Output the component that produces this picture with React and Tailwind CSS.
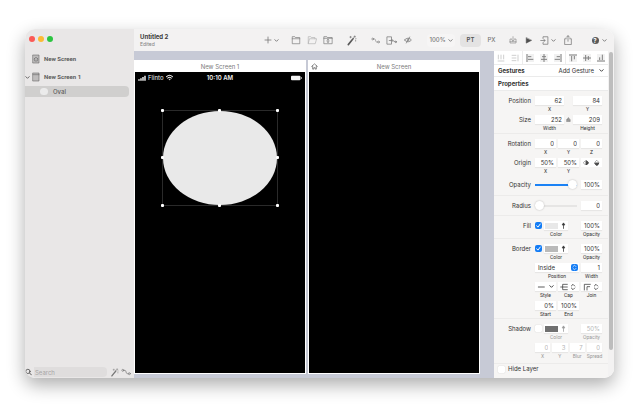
import { useState } from "react";

const sans = "font-['Inter','Liberation_Sans',sans-serif]";

function Icon({ children, className = "w-3 h-3" }) {
    return (
        <svg viewBox="0 0 12 12" className={`block shrink-0 ${className}`} fill="none" stroke="currentColor" strokeWidth="0.8" strokeLinecap="round" strokeLinejoin="round" aria-hidden="true">
            {children}
        </svg>
    );
}

const Chevron = () => (
    <Icon className="w-[5px] h-[5px]"><path d="M2 4l4 4 4-4" strokeWidth="2.200" /></Icon>
);

const UpDown = ({ className = "w-2 h-2" }) => (
    <Icon className={className}><path d="M3.500 4.500L6 2l2.500 2.500M3.500 7.500L6 10l2.500-2.500" strokeWidth="1.200" /></Icon>
);

const Wand = ({ className }) => (
    <Icon className={className}>
        <path d="M2.500 10.500L6.800 5.200" strokeWidth="1.800" />
        <path d="M7.200 4.700l.6-.7" strokeWidth="1.600" />
        <path d="M5 1.500v1.600M4.200 2.300h1.600M9.500 1v1.600M8.700 1.800h1.600M10.500 5.500v1.200M8 2.900v.2M10.800 3.800v.2" strokeWidth="0.600" />
    </Icon>
);

const LinkIcon = ({ className }) => (
    <Icon className={className}>
        <circle cx="2.200" cy="4" r="1.200" />
        <circle cx="10" cy="8" r="1.200" />
        <path d="M3.400 4h1.400c1.800 0 .8 4 2.600 4h1.400" />
    </Icon>
);

function ToolButton({ label, children, className = "w-4" }) {
    return (
        <button type="button" aria-label={label} className={`flex h-4 shrink-0 items-center justify-center gap-[2px] ${className}`}>
            {children}
        </button>
    );
}

function Toolbar() {
    return (
        <header className="flex h-[22px] items-center bg-[#f3f2f2] pl-[6px] pr-[5px] text-[#777]">
            <div className="w-[110px] min-w-0 text-[#3c3c3c]">
                <h1 className="text-[6px] leading-[8px] font-bold">Untitled 2</h1>
                <p className="text-[5px] leading-[6px] text-[#808080]">Edited</p>
            </div>
            <div className="ml-auto flex items-center">
                <ToolButton label="Add" className="w-[18px]">
                    <Icon className="w-2 h-2"><path d="M6 1.500v9M1.500 6h9" strokeWidth="1.200" /></Icon>
                    <Chevron />
                </ToolButton>
                <div className="ml-2 flex">
                    <ToolButton label="New group">
                        <Icon className="w-2.5 h-2.5"><path d="M1.500 10V2h3l.8 1h5.200v7zM1.500 4.500h9" /></Icon>
                    </ToolButton>
                    <ToolButton label="Open group">
                        <span className="text-[#b0b0b0]">
                            <Icon className="w-2.5 h-2.5"><path d="M1.500 10V2h3l.8 1h4.200v1.500M1.500 10l1.500-5.500h8.500L10 10z" /></Icon>
                        </span>
                    </ToolButton>
                    <ToolButton label="Scroll group">
                        <Icon className="w-2.5 h-2.5"><path d="M1 10V2h3.500l.8 1H11v7zM1 4h10M6 5.300v3.400M4.800 6.300L6 5.200l1.200 1.100M4.800 7.900L6 9l1.200-1.100" /></Icon>
                    </ToolButton>
                </div>
                <div className="ml-[7px] flex text-[#5a5a5a]">
                    <ToolButton label="Behavior designer"><Wand className="w-[11px] h-[11px]" /></ToolButton>
                </div>
                <div className="ml-2 flex">
                    <ToolButton label="Link"><LinkIcon className="w-[9px] h-[9px]" /></ToolButton>
                    <ToolButton label="Link out" className="w-[17px]">
                        <Icon className="w-[11px] h-[11px]"><path d="M6 4.500V2H1v8h5V8M3.500 6h3" /><path d="M6.200 4.700L7.800 6 6.200 7.300zM7.800 6c1 0 1 1.500 2 1.500" /><circle cx="10.600" cy="7.500" r="0.800" /></Icon>
                    </ToolButton>
                    <ToolButton label="Toggle links">
                        <Icon className="w-2 h-2"><path d="M1 6c2-3.600 8-3.600 10 0-2 3.600-8 3.600-10 0zM3.500 10.500l5-9" strokeWidth="1.100" /><circle cx="6" cy="6" r="1.300" /></Icon>
                    </ToolButton>
                </div>
                <button type="button" className="ml-[11px] flex h-[13px] w-7 items-center justify-center gap-[2px] rounded-sm bg-[#f6f5f5] text-[6px] leading-[8px] font-medium">
                    100% <Chevron />
                </button>
                <button type="button" className="ml-[5px] h-[13px] w-[21px] rounded-sm bg-[#e4e3e3] text-[6px] leading-[8px] font-semibold text-[#555]">PT</button>
                <button type="button" className="h-[13px] w-[21px] text-[6px] leading-[8px] font-medium">PX</button>
                <ToolButton label="Import from Sketch" className="ml-[3px] w-4">
                    <Icon className="w-2 h-2"><path d="M4 4.500H1.500v6h9v-6H8M6 1v6.500M4 5.800l2 2 2-2M1.500 8.500h9" /></Icon>
                </ToolButton>
                <ToolButton label="Preview" className="w-[14px] text-[#4f4f4f]">
                    <Icon className="w-[7px] h-[7px]"><path d="M2 1.500v9L11 6z" fill="currentColor" /></Icon>
                </ToolButton>
                <ToolButton label="Export" className="ml-[3px] w-5">
                    <Icon className="w-[9px] h-[9px]"><path d="M4 3V1h6.500v10H4V9M1 6h5.500M4.800 4L6.800 6l-2 2" strokeWidth="1" /></Icon>
                    <Chevron />
                </ToolButton>
                <ToolButton label="Share" className="ml-[2px] w-4">
                    <Icon className="w-2.5 h-2.5"><path d="M4 4.500H2v7h8v-7H8M6 7.500V1M4 2.800L6 .8l2 2" strokeWidth="0.900" /></Icon>
                </ToolButton>
                <button type="button" aria-label="Help" className="ml-[13px] flex h-4 w-5 items-center justify-center gap-[3px]">
                    <span className="flex h-[7px] w-[7px] items-center justify-center rounded-full bg-[#5a5a5a] text-[6px] leading-[7px] font-bold text-white">?</span>
                    <Chevron />
                </button>
            </div>
        </header>
    );
}

function Sidebar() {
    return (
        <aside className="flex w-[109px] shrink-0 flex-col bg-[#e9e7e7] text-[6px] leading-[8px] text-[#5c5c5c]">
            <div className="flex gap-[3px] px-1 pt-[7px]">
                <button type="button" aria-label="Close" className="h-1.5 w-1.5 rounded-full bg-[#fb5a56]" />
                <button type="button" aria-label="Minimize" className="h-1.5 w-1.5 rounded-full bg-[#fcbb35]" />
                <button type="button" aria-label="Zoom" className="h-1.5 w-1.5 rounded-full bg-[#2cc541]" />
            </div>
            <ul className="mt-[8px] font-['Roboto','Liberation_Sans',sans-serif] font-bold">
                <li className="flex h-[18px] items-center gap-1 pl-[7px]">
                    <Icon className="w-2 h-2.5"><path d="M1.500 0h9v12h-9z" fill="#bebcbc" /><path d="M3 6l3-2.700L9 6M4 5.500V9h4V5.500" /></Icon>
                    New Screen
                </li>
                <li className="flex h-[18px] items-center gap-1">
                    <span className="-mr-[2px]"><Chevron /></span>
                    <Icon className="w-2 h-2.5"><path d="M1.500 0h9v12h-9z" fill="#bebcbc" /><path d="M1.500 2.500h9" /></Icon>
                    New Screen 1
                </li>
                <li className="mr-[5px] flex h-[11px] items-center gap-[5px] rounded-r-sm bg-[#d0cfce] pl-[15px] font-['Inter','Liberation_Sans',sans-serif] font-medium">
                    <span className="h-[7px] w-2 rounded-full bg-[#ebebeb]" />
                    Oval
                </li>
            </ul>
            <div className="mt-auto flex items-center gap-[3px] pr-[3px] pb-px text-[#777]">
                <label className="flex h-[10px] flex-1 items-center rounded-sm bg-[#dfdddd]">
                    <span className="bg-[#e9e7e7] pr-[2px] text-[#444]">
                        <Icon className="w-[7px] h-[10px]"><circle cx="5" cy="5" r="3.700" strokeWidth="1.300" /><path d="M8 8l3 3" strokeWidth="1.500" /></Icon>
                    </span>
                    <input type="text" aria-label="Search" placeholder="Search" className="h-[10px] w-full min-w-0 bg-transparent pl-px text-[6px] leading-[8px] outline-none placeholder:text-[#a8a6a6]" />
                </label>
                <div className="flex shrink-0 gap-[2px]">
                    <button type="button" aria-label="Filter behaviors"><Wand className="w-[9px] h-[9px]" /></button>
                    <button type="button" aria-label="Filter links"><LinkIcon className="w-2.5 h-2.5" /></button>
                </div>
            </div>
        </aside>
    );
}

function Handle({ className }) {
    return <span className={`absolute h-[3px] w-[3px] rounded-[1px] bg-white ${className}`} />;
}

function Frame({ title, home, children }) {
    return (
        <section className="flex flex-1 flex-col bg-white">
            <div className="relative h-3 text-center text-[6px] leading-[13px] text-[#7c7c7c]">
                {home && (
                    <span className="absolute top-[3px] left-[3px] text-[#555]">
                        <Icon className="w-[7px] h-[7px]"><path d="M1 6l5-4.500L11 6M2.800 5v5.500h2V8h2.400v2.500h2V5" strokeWidth="1.100" /></Icon>
                    </span>
                )}
                {title}
            </div>
            <div className="relative mx-px mb-px flex-1 bg-black">{children}</div>
        </section>
    );
}

function Canvas() {
    return (
        <main className="flex flex-1 gap-[2px] bg-[#c7cad6] pt-[9px] pr-[14px] pb-1">
            <Frame title="New Screen 1">
                <div className="grid grid-cols-3 items-center px-[3px] pt-px text-[6px] leading-[9px] font-semibold text-[#f2f2f2]">
                    <span className="flex items-center gap-[2px] font-normal">
                        <Icon className="w-2 h-2"><path d="M1.500 8v2M4.500 6.500v3.500M7.500 4.500v5.500M10.500 2.500v7.500" strokeWidth="2.200" strokeLinecap="butt" /></Icon>
                        Flinto
                        <Icon className="w-[7px] h-[7px]"><path d="M1 4.500c3-2.800 7-2.800 10 0M3 7c2-1.800 4-1.800 6 0" strokeWidth="1.800" /><circle cx="6" cy="9.300" r="0.800" fill="currentColor" /></Icon>
                    </span>
                    <span className="text-center">10:10 AM</span>
                    <span className="justify-self-end">
                        <svg viewBox="0 0 12 6" className="block h-[6px] w-3" fill="currentColor" aria-hidden="true">
                            <rect x="1" y="0.800" width="9.500" height="4.400" rx="1" />
                            <rect x="11" y="2" width="0.600" height="2" />
                        </svg>
                    </span>
                </div>
                <div className="absolute top-[38px] left-[27px] h-[96px] w-[116px] border border-[#2a2a2a]">
                    <div className="h-full w-full rounded-[50%] bg-[#e9e9e9]" />
                    <Handle className="-top-[2px] -left-[2px]" />
                    <Handle className="-top-[2px] left-[55px]" />
                    <Handle className="-top-[2px] -right-[2px]" />
                    <Handle className="top-[45px] -left-[2px]" />
                    <Handle className="top-[45px] -right-[2px]" />
                    <Handle className="-bottom-[2px] -left-[2px]" />
                    <Handle className="-bottom-[2px] left-[55px]" />
                    <Handle className="-right-[2px] -bottom-[2px]" />
                </div>
            </Frame>
            <Frame title="New Screen" home />
        </main>
    );
}

function Caption({ children }) {
    return <span className="block h-2 text-center font-['Roboto','Liberation_Sans',sans-serif] text-[5px] leading-[8px]">{children}</span>;
}

/* One number box with its small caption below */
function Field({ value, caption, label, className = "" }) {
    return (
        <label className={`block min-w-0 ${className}`}>
            <input
                type="text"
                defaultValue={value}
                aria-label={label || caption}
                className="block h-[9px] w-full bg-white px-[2px] text-right text-[6px] leading-[9px] shadow-[0_1px_1px_rgba(0,0,0,0.06)] outline-none"
            />
            {caption && <Caption>{caption}</Caption>}
        </label>
    );
}

function Row({ label, children }) {
    return (
        <div className="flex gap-1">
            <div className="w-[37px] shrink-0 text-right text-[6px] leading-[9px]">{label}</div>
            <div className="min-w-0 flex-1">{children}</div>
        </div>
    );
}

function Section({ children, className = "" }) {
    return <div className={`flex flex-col gap-[2px] border-b border-[#ecebea] pt-[5px] pr-[6px] ${className}`}>{children}</div>;
}

function Check({ id, label, checked }) {
    const [on, setOn] = useState(checked);
    return (
        <span className="relative block h-[7px] w-[7px] shrink-0">
            <input type="checkbox" id={id} aria-label={label} checked={on} onChange={(e) => setOn(e.target.checked)} className="block h-[7px] w-[7px] appearance-none rounded-[1px] bg-white shadow-[0_0_1px_rgba(0,0,0,0.3)] checked:rounded-[2px] checked:bg-[#137cf5] checked:shadow-none" />
            {on && (
                <span className="pointer-events-none absolute inset-0 text-white">
                    <Icon className="w-[7px] h-[7px]"><path d="M3 6.500l2 2.300L9 3.500" strokeWidth="1.700" /></Icon>
                </span>
            )}
        </span>
    );
}

function ColorRow({ label, swatch, opacity, checked = false }) {
    return (
        <Row label={label}>
            <div className="grid grid-cols-3 gap-[2px]">
                <div className="col-span-2 flex gap-[2px] pr-[11px]">
                    <div className="pt-px"><Check label={`${label} enabled`} checked={checked} /></div>
                    <div className={`flex-1 ${checked ? "" : "text-[#999]"}`}>
                        <button type="button" aria-label={`${label} color`} className="flex h-[9px] w-full items-center gap-[2px] bg-white px-px shadow-[0_1px_1px_rgba(0,0,0,0.06)]">
                            <span className={`h-[6px] w-[13px] ${swatch}`} />
                            <Icon className="w-[7px] h-[7px]"><path d="M6 11V3.500M4 4.500L6 1.500l2 3z" fill="currentColor" strokeWidth="1.300" /></Icon>
                        </button>
                        <Caption>Color</Caption>
                    </div>
                </div>
                <Field value={opacity} caption="Opacity" label={`${label} opacity`} />
            </div>
        </Row>
    );
}

function Slider({ label, value }) {
    const [v, setV] = useState(value);
    return (
        <span className="relative flex h-[9px] items-center">
            <span className="h-[2px] w-full bg-[#e6e5e4]">
                <span className="block h-[2px] bg-[#1b82f5]" style={{ width: `${v}%` }} />
            </span>
            <input
                type="range"
                aria-label={label}
                value={v}
                onChange={(e) => setV(e.target.value)}
                className="absolute inset-0 h-[9px] w-full appearance-none bg-transparent [&::-webkit-slider-thumb]:h-[9px] [&::-webkit-slider-thumb]:w-[9px] [&::-webkit-slider-thumb]:appearance-none [&::-webkit-slider-thumb]:rounded-full [&::-webkit-slider-thumb]:bg-white [&::-webkit-slider-thumb]:shadow-[0_0_2px_rgba(0,0,0,0.25)]"
            />
        </span>
    );
}

function PickButton({ label, children }) {
    return (
        <div>
            <button type="button" aria-label={label} className="flex h-[9px] w-full items-center justify-between bg-white px-[2px] shadow-[0_1px_1px_rgba(0,0,0,0.06)]">
                {children}
            </button>
            <Caption>{label}</Caption>
        </div>
    );
}

const ALIGN = [
    { name: "Distribute horizontally", d: "M2 1v7M6 1v7M10 1v7M1 10.500h10", dim: true },
    { name: "Distribute vertically", d: "M1 2h7M1 6h7M1 10h7M10.500 1v10", dim: true },
    { name: "Align left", d: "M1.500 0v12M3 4h5M3 8h8", line: true },
    { name: "Align center", d: "M6 0v12M3 4h6M1.500 8h9" },
    { name: "Align right", d: "M10.500 0v12M4 4h5M1 8h8" },
    { name: "Align top", d: "M0 1.500h12M4 3v8M8 3v5", line: true },
    { name: "Align middle", d: "M0 6h12M4 1.500v9M8 3v6" },
    { name: "Align bottom", d: "M0 10.500h12M4 5v4M8 1v8" },
];

function Inspector() {
    return (
        <aside className="flex w-[120px] shrink-0 bg-[#f6f5f4] text-[#333]">
            <div className="min-w-0 flex-1">
                <div className="flex h-[13px] bg-white">
                    {ALIGN.map((a) => (
                        <button key={a.name} type="button" aria-label={a.name} className={`flex flex-1 items-center justify-center ${a.line ? "border-l border-[#ececec]" : ""} ${a.dim ? "text-[#cfcfcf]" : "text-[#808080]"}`}>
                            <span className={a.dim ? "" : "bg-[#f1f1f1]"}>
                                <Icon className="w-2 h-2"><path d={a.d} strokeWidth="1.500" strokeLinecap="butt" /></Icon>
                            </span>
                        </button>
                    ))}
                </div>
                <div className="flex h-[13px] items-center justify-between border-y border-[#ebebeb] bg-white px-1 text-[6px] leading-[9px]">
                    <h2 className="font-bold">Gestures</h2>
                    <button type="button" className="flex items-center gap-[5px]">Add Gesture <Chevron /></button>
                </div>
                <h2 className="h-[14px] border-b border-[#ebebeb] bg-white pl-1 text-[6px] leading-[14px] font-bold">Properties</h2>

                <Section className="pb-px">
                    <Row label="Position">
                        <div className="flex gap-[9px]">
                            <Field value="62" caption="X" className="flex-1" />
                            <Field value="84" caption="Y" className="flex-1" />
                        </div>
                    </Row>
                    <Row label="Size">
                        <div className="flex">
                            <Field value="252" caption="Width" className="flex-1" />
                            <button type="button" aria-label="Lock ratio" className="flex h-[9px] w-[9px] items-center justify-center text-[#777]">
                                <Icon className="w-[5px] h-[5px]"><path d="M2 6h8v5H2zM4 6V3.500c0-2.500 4-2.500 4 0" fill="#999" strokeWidth="1.200" /></Icon>
                            </button>
                            <Field value="209" caption="Height" className="flex-1" />
                        </div>
                    </Row>
                </Section>

                <Section className="pb-[6px]">
                    <Row label="Rotation">
                        <div className="grid grid-cols-3 gap-[2px]">
                            <Field value="0" caption="X" label="Rotation X" />
                            <Field value="0" caption="Y" label="Rotation Y" />
                            <Field value="0" caption="Z" label="Rotation Z" />
                        </div>
                    </Row>
                    <Row label="Origin">
                        <div className="grid grid-cols-3 gap-[2px]">
                            <Field value="50%" caption="X" label="Origin X" />
                            <Field value="50%" caption="Y" label="Origin Y" />
                            <div className="flex h-[9px] items-center justify-around bg-white">
                                <button type="button" aria-label="Flip horizontal"><Icon className="w-1.5 h-1.5"><path d="M7 2v8l4-4z" fill="currentColor" strokeWidth="1.500" /><path d="M5 2v8L1 6z" /></Icon></button>
                                <button type="button" aria-label="Flip vertical"><Icon className="w-1.5 h-1.5"><path d="M2 7h8l-4 4z" fill="currentColor" strokeWidth="1.500" /><path d="M2 5h8L6 1z" /></Icon></button>
                            </div>
                        </div>
                    </Row>
                    <div className="pt-[3px]">
                        <Row label="Opacity">
                            <div className="grid grid-cols-3 gap-[2px]">
                                <div className="col-span-2 pr-[2px]"><Slider label="Opacity" value={100} /></div>
                                <Field value="100%" label="Opacity value" />
                            </div>
                        </Row>
                    </div>
                </Section>

                <Section className="pb-[5px]">
                    <Row label="Radius">
                        <div className="grid grid-cols-3 gap-[2px]">
                            <div className="col-span-2 pr-[2px]"><Slider label="Radius" value={0} /></div>
                            <Field value="0" label="Radius value" />
                        </div>
                    </Row>
                </Section>

                <Section>
                    <ColorRow label="Fill" swatch="bg-[#e8e8e8]" opacity="100%" checked />
                </Section>

                <Section>
                    <ColorRow label="Border" swatch="bg-[#bababa]" opacity="100%" checked />
                    <Row>
                        <div className="grid grid-cols-3 gap-[2px]">
                            <label className="relative col-span-2 block">
                                <select defaultValue="Inside" aria-label="Border position" className="block h-[9px] w-full appearance-none bg-white pl-[3px] text-[6px] leading-[9px] shadow-[0_1px_1px_rgba(0,0,0,0.06)]">
                                    <option>Inside</option>
                                    <option>Center</option>
                                    <option>Outside</option>
                                </select>
                                <span className="pointer-events-none absolute top-px right-px rounded-[2px] bg-[#137cf5] text-white">
                                    <UpDown className="w-[7px] h-[7px]" />
                                </span>
                                <Caption>Position</Caption>
                            </label>
                            <Field value="1" caption="Width" label="Border width" />
                        </div>
                    </Row>
                    <Row>
                        <div className="grid grid-cols-3 gap-[2px]">
                            <PickButton label="Style">
                                <Icon className="w-2 h-2"><path d="M2 6h9" strokeWidth="1.200" /></Icon>
                                <Chevron />
                            </PickButton>
                            <PickButton label="Cap">
                                <Icon className="w-2 h-2"><path d="M11 2H4v8h7M1 6h10" strokeWidth="1.100" /></Icon>
                                <UpDown />
                            </PickButton>
                            <PickButton label="Join">
                                <Icon className="w-2 h-2"><path d="M2 10.500V2h9M6 10.500V5.500h4" strokeWidth="1.100" /></Icon>
                                <UpDown />
                            </PickButton>
                        </div>
                    </Row>
                    <Row>
                        <div className="grid grid-cols-3 gap-[2px]">
                            <Field value="0%" caption="Start" />
                            <Field value="100%" caption="End" />
                        </div>
                    </Row>
                </Section>

                <Section className="pb-[3px]">
                    <div className="[&_input]:text-[#b5b5b5] [&_label]:text-[#999]">
                        <ColorRow label="Shadow" swatch="bg-[#707070]" opacity="50%" />
                    </div>
                    <div className="text-[#999] [&_input]:text-[#b5b5b5]">
                        <Row>
                            <div className="grid grid-cols-4 gap-[2px]">
                                <Field value="0" caption="X" label="Shadow X" />
                                <Field value="3" caption="Y" label="Shadow Y" />
                                <Field value="7" caption="Blur" />
                                <Field value="0" caption="Spread" />
                            </div>
                        </Row>
                    </div>
                </Section>

                <div className="flex items-center gap-[3px] pt-px pb-[5px] pl-1 text-[6px] leading-[8px]">
                    <Check id="hide-layer" checked={false} />
                    <label htmlFor="hide-layer">Hide Layer</label>
                </div>
            </div>
            <div className="w-[6px] shrink-0 bg-[#f3f2f2] px-px pt-px">
                <div className="h-[298px] rounded-full bg-[#bdbdbd]" />
            </div>
        </aside>
    );
}

export default function App() {
    return (
        <div className={`flex min-h-screen bg-white px-[25px] pt-[29px] pb-[33px] ${sans}`}>
            <div className="flex flex-1 overflow-hidden rounded-[10px] shadow-[0_7px_18px_rgba(0,0,0,0.32)]">
                <Sidebar />
                <div className="flex min-w-0 flex-1 flex-col">
                    <Toolbar />
                    <div className="flex flex-1">
                        <Canvas />
                        <Inspector />
                    </div>
                </div>
            </div>
        </div>
    );
}
